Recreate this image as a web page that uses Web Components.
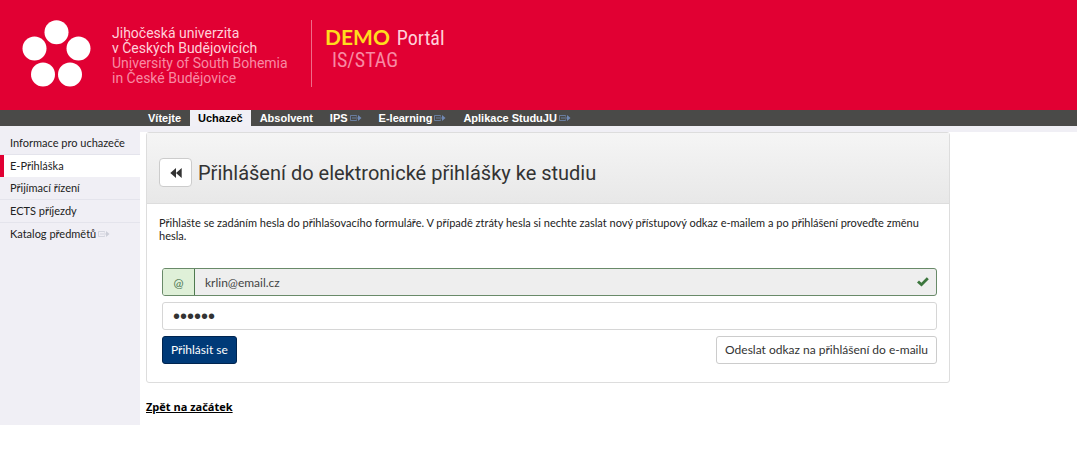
<!DOCTYPE html>
<html lang="cs">
<head>
<meta charset="utf-8">
<meta name="viewport" content="width=device-width, initial-scale=1">
<title>Portál IS/STAG</title>
<style>
body { margin: 0; background: #fff; color: #222; font: 11px/13px Lato, sans-serif; }
</style>
</head>
<body>
<stag-portal></stag-portal>
<script>
const define = (name, html) => {
  const template = document.createElement('template');
  template.innerHTML = html;
  customElements.define(name, class extends HTMLElement {
    constructor() {
      super();
      this.attachShadow({ mode: 'open' }).append(template.content.cloneNode(true));
    }
  });
};

define('stag-external', `
<style>
:host { display: inline-block; color: #7189b4; }
svg { display: block; }
</style>
<svg width="12" height="8" viewBox="0 0 12 8" fill="none" stroke="currentColor" aria-hidden="true">
  <path d="M6.500 2.500v-1h-6v5h6v-1M2 4h6" stroke-opacity=".8"/><path d="M8 1v6l3.500-3z" fill="currentColor" stroke="none"/>
</svg>`);

define('stag-banner', `
<style>
:host { display: flex; align-items: flex-start; min-height: 90px; padding-top: 20px; padding-left: 22px; background: #e10033; color: #ffd0da; }
.mark { display: block; flex: none; }
.name { margin: 6px 0 0 21px; width: 199px; box-sizing: border-box; font: 14px/15px Roboto, sans-serif; white-space: nowrap; }
.name p, .title p { margin: 0; }
.name .en, .title .sys { color: #f88aa3; }
.title { border-left: 1px solid #f06a88; height: 67px; padding-left: 13px; font: 20px/22px "Roboto Condensed", "Liberation Sans", sans-serif; white-space: nowrap; }
.title p { display: flex; gap: 7px; align-items: baseline; }
.title p:first-child { padding-top: 6px; }
.title b { font: bold 21px/22px Lato, sans-serif; color: #ffdc1e; }
.title .sys { padding-left: 7px; }
</style>
<svg class="mark" width="69" height="67" viewBox="0 0 69 67" fill="#fff" role="img" aria-label="Jihočeská univerzita">
  <circle cx="34.500" cy="12.300" r="12"/><circle cx="12.500" cy="28.500" r="12"/><circle cx="56.500" cy="28.500" r="12"/><circle cx="21" cy="54.500" r="12"/><circle cx="48" cy="54.500" r="12"/>
</svg>
<div class="name"><p>Jihočeská univerzita</p><p>v Českých Budějovicích</p><p class="en">University of South Bohemia</p><p class="en">in České Budějovice</p></div>
<div class="title"><p><b>DEMO</b> <span>Portál</span></p><p class="sys">IS/STAG</p></div>`);

define('stag-tab', `
<style>
:host { display: block; }
a { display: flex; gap: 2px; align-items: center; height: 16px; padding: 0 8px; color: #fff; text-decoration: none; font: bold 11px/16px "Liberation Sans", sans-serif; white-space: nowrap; }
:host([active]) a { background: #f1f0f6; color: #000; }
stag-external { display: none; }
:host([external]) stag-external { display: block; }
</style>
<a href="#"><slot></slot><stag-external></stag-external></a>`);

define('stag-tabs', `
<style>
:host { display: block; background: #4a4a48; border-bottom: 6px solid #f0eff5; }
nav { display: flex; gap: 1px; padding-left: 140px; }
</style>
<nav><slot></slot></nav>`);

define('stag-link', `
<style>
:host { display: block; border-bottom: 1px solid #e4e4ec; }
a { display: flex; align-items: center; gap: 2px; height: 22px; padding-left: 10px; color: #222; line-height: 12px; text-decoration: none; white-space: nowrap; }
:host([active]) { background: #fff; border-bottom: 0; }
:host([active]) a { border-left: 4px solid #e10033; padding-left: 6px; }
:host([last]) { border-bottom: 0; }
stag-external { display: none; color: #ccced8; }
:host([external]) stag-external { display: block; }
</style>
<a href="#"><slot></slot><stag-external></stag-external></a>`);

define('stag-menu', `
<style>
:host { display: block; background: #f0eff5; }
</style>
<nav><slot></slot></nav>`);

define('stag-panel', `
<style>
:host { display: block; border: 1px solid #ddd; border-radius: 3px; background: #fff; }
header { display: flex; align-items: center; gap: 6px; padding: 25px 12px 16px; border-bottom: 1px solid #ddd; background: linear-gradient(#f5f5f5, #e8e8e8); }
h1 { margin: 0; font: 20px/26px Roboto, sans-serif; color: #333; }
button { display: flex; align-items: center; justify-content: center; width: 33px; height: 29px; padding: 0; border: 1px solid #ccc; border-radius: 4px; background: #fff; color: #333; }
.body { padding: 12px; }
</style>
<header>
  <button type="button" aria-label="Zpět"><svg width="12" height="10" viewBox="0 0 12 10" fill="currentColor" aria-hidden="true"><path d="M6 0v10L.3 5zM11.700 0v10L6 5z"/></svg></button>
  <h1><slot name="title"></slot></h1>
</header>
<div class="body"><slot></slot></div>`);

define('stag-login', `
<style>
:host { display: block; }
form { display: grid; gap: 6px; padding: 26px 0 6px 3px; }
input { box-sizing: border-box; width: 100%; min-width: 0; height: 28px; padding: 0 10px; border: 1px solid #d6d6d6; border-radius: 3px; background: #fff; color: #444; font: 12px/16px Lato, sans-serif; outline: 0; }
input[type=password] { font: 20px/24px "Liberation Sans", sans-serif; color: #333; }
.group { display: flex; align-items: center; box-sizing: border-box; height: 28px; border: 1px solid #698a69; border-radius: 3px; background: #eee; overflow: hidden; padding-right: 7px; }
.group label { display: flex; align-items: center; justify-content: center; flex: none; width: 31px; height: 26px; border-right: 1px solid #4e7a4f; background: #dff0d8; color: #4b7550; font-size: 12px; }
.group input { border: 0; background: none; flex: 1; height: 26px; }
svg { flex: none; }
.actions { display: flex; justify-content: space-between; }
button { height: 28px; padding: 0 8px; border: 1px solid #ccc; border-radius: 3px; background: #fff; color: #333; font: 12px/16px Lato, sans-serif; }
.primary { background: #003a78; border-color: #00244f; color: #fff; }
</style>
<form>
  <div class="group"><label for="mail">@</label><input id="mail" type="email" value="krlin@email.cz" readonly>
    <svg width="12" height="10" viewBox="0 0 12 10" fill="#3c763d" aria-hidden="true"><path d="M0 5.500 2 3.500l2.400 2.200L9.800.3l2 1.900-7.300 7.300z"/></svg></div>
  <input type="password" value="heslo1" aria-label="Heslo">
  <div class="actions"><button class="primary" type="button">Přihlásit se</button><button type="button">Odeslat odkaz na přihlášení do e-mailu</button></div>
</form>`);

define('stag-portal', `
<style>
:host { display: block; }
.columns { display: grid; grid-template-columns: 140px minmax(0, 1fr); min-height: 293px; }
main { max-width: 804px; padding-left: 6px; }
p { margin: 0; }
.back { display: inline-block; margin-top: 17px; color: #000; font: bold 11px/13px "Open Sans", sans-serif; }
.intro { color: #222; }
</style>
<stag-banner></stag-banner>
<stag-tabs>
  <stag-tab>Vítejte</stag-tab><stag-tab active>Uchazeč</stag-tab><stag-tab>Absolvent</stag-tab><stag-tab external>IPS</stag-tab><stag-tab external>E-learning</stag-tab><stag-tab external>Aplikace StuduJU</stag-tab>
</stag-tabs>
<div class="columns">
  <stag-menu>
    <stag-link>Informace pro uchazeče</stag-link><stag-link active>E-Přihláška</stag-link><stag-link>Přijímací řízení</stag-link><stag-link>ECTS příjezdy</stag-link><stag-link external last>Katalog předmětů</stag-link>
  </stag-menu>
  <main>
    <stag-panel>
      <span slot="title">Přihlášení do elektronické přihlášky ke studiu</span>
      <p class="intro">Přihlašte se zadáním hesla do přihlašovacího formuláře. V případě ztráty hesla si nechte zaslat nový přístupový odkaz e-mailem a po přihlášení proveďte změnu hesla.</p>
      <stag-login></stag-login>
    </stag-panel>
    <a class="back" href="#">Zpět na začátek</a>
  </main>
</div>`);
</script>
</body>
</html>
